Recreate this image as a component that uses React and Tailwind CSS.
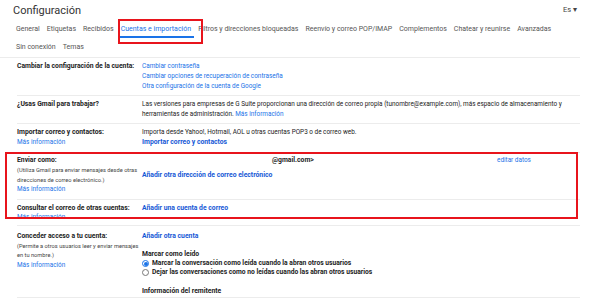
import React from 'react';

const tabs1 = [
  'General',
  'Etiquetas',
  'Recibidos',
  'Cuentas e importación',
  'Filtros y direcciones bloqueadas',
  'Reenvío y correo POP/IMAP',
  'Complementos',
  'Chatear y reunirse',
  'Avanzadas',
];

function Row({ label, children, className = '' }) {
  return (
    <div className={`grid grid-cols-[125px_1fr] border-b border-[#ececec] ${className}`}>
      <div>{label}</div>
      <div>{children}</div>
    </div>
  );
}

function Radio({ checked }) {
  return checked ? (
    <span className="flex h-[7px] w-[7px] items-center justify-center rounded-full border border-[#1a73e8]">
      <span className="h-[4px] w-[4px] rounded-full bg-[#1a73e8]" />
    </span>
  ) : (
    <span className="h-[7px] w-[7px] rounded-full border border-[#777]" />
  );
}

export default function App() {
  return (
    <div className="relative h-[298px] w-[589px] overflow-hidden bg-white font-['Roboto',sans-serif] text-[#222]">
      {/* header */}
      <div className="flex h-[20px] items-center justify-between pl-[13px] pr-[12px]">
        <h1 className="text-[11px] leading-none text-[#333]">Configuración</h1>
        <span className="text-[7.5px] text-[#444]">Es ▾</span>
      </div>

      {/* tabs */}
      <div className="w-[580px] whitespace-nowrap border-b border-[#ececec] pl-[16px] text-[7px] text-[#555]">
        <div className="flex h-[18px] items-center gap-[7px]">
          {tabs1.map((t) =>
            t === 'Cuentas e importación' ? (
              <span key={t} className="relative flex h-full items-center text-[#1a73e8]">
                {t}
                <span className="absolute bottom-[0px] left-[-3px] right-[-3px] h-[2px] bg-[#1a73e8]" />
              </span>
            ) : (
              <span key={t}>{t}</span>
            )
          )}
        </div>
        <div className="flex h-[19px] items-center gap-[7px]">
          <span>Sin conexión</span>
          <span>Temas</span>
        </div>
      </div>

      {/* settings */}
      <div className="w-[580px] pl-[17px] text-[6.4px] leading-[10px]">
        <Row
          className="pb-[4px] pt-[3px]"
          label={<span className="text-[6.8px] font-bold">Cambiar la configuración de la cuenta:</span>}
        >
          <div className="text-[#1a73e8]">Cambiar contraseña</div>
          <div className="text-[#1a73e8]">Cambiar opciones de recuperación de contraseña</div>
          <div className="text-[#1a73e8]">Otra configuración de la cuenta de Google</div>
        </Row>

        <Row
          className="pb-[4px] pt-[3px]"
          label={<span className="text-[6.8px] font-bold">¿Usas Gmail para trabajar?</span>}
        >
          <p className="pr-[2px]">
            Las versiones para empresas de G Suite proporcionan una dirección de correo propia
            (tunombre@example.com), más espacio de almacenamiento y herramientas de administración.{' '}
            <a className="text-[#1a73e8]">Más información</a>
          </p>
        </Row>

        <Row
          className="pb-[5px] pt-[3px]"
          label={
            <>
              <div className="text-[6.8px] font-bold">Importar correo y contactos:</div>
              <div className="text-[#1a73e8]">Más información</div>
            </>
          }
        >
          <div>Importa desde Yahoo!, Hotmail, AOL u otras cuentas POP3 o de correo web.</div>
          <div className="text-[6.8px] font-bold text-[#1558d6]">Importar correo y contactos</div>
        </Row>

        <Row
          className="pb-[5px] pt-[2px]"
          label={
            <>
              <div className="text-[6.8px] font-bold">Enviar como:</div>
              <div className="text-[5.7px] text-[#444]">(Utiliza Gmail para enviar mensajes desde otras</div>
              <div className="text-[5.7px] text-[#444]">direcciones de correo electrónico.)</div>
              <div className="leading-[9px] text-[#1a73e8]">Más información</div>
            </>
          }
        >
          <div className="flex">
            <span className="w-[355px] pl-[130px] text-[6.8px] font-bold">@gmail.com&gt;</span>
            <span className="text-[#1a73e8]">editar datos</span>
          </div>
          <div className="mt-[5px] text-[6.8px] font-bold text-[#1558d6]">
            Añadir otra dirección de correo electrónico
          </div>
        </Row>

        <Row
          className="pb-[4px] pt-[3px]"
          label={
            <>
              <div className="text-[6.8px] font-bold">Consultar el correo de otras cuentas:</div>
              <div className="leading-[8px] text-[#1a73e8]">Más información</div>
            </>
          }
        >
          <div className="text-[6.8px] font-bold text-[#1558d6]">Añadir una cuenta de correo</div>
        </Row>

        <Row
          className="pt-[5px]"
          label={
            <>
              <div className="text-[6.8px] font-bold">Conceder acceso a tu cuenta:</div>
              <div className="text-[5.7px] text-[#444]">(Permite a otros usuarios leer y enviar mensajes</div>
              <div className="leading-[9px] text-[5.7px] text-[#444]">en tu nombre.)</div>
              <div className="text-[#1a73e8]">Más información</div>
            </>
          }
        >
          <div className="text-[6.8px] font-bold text-[#1558d6]">Añadir otra cuenta</div>
          <div className="mt-[8px] text-[6.8px] font-bold">Marcar como leído</div>
          <div className="flex items-center gap-[3px] leading-[9px]">
            <Radio checked />
            <span className="text-[6.7px] font-bold">
              Marcar la conversación como leída cuando la abran otros usuarios
            </span>
          </div>
          <div className="flex items-center gap-[3px] leading-[9px]">
            <Radio />
            <span className="text-[6.7px] font-bold">
              Dejar las conversaciones como no leídas cuando las abran otros usuarios
            </span>
          </div>
          <div className="mb-[1px] mt-[9px] text-[6.8px] font-bold">Información del remitente</div>
        </Row>
      </div>

      {/* annotation boxes */}
      <div className="pointer-events-none absolute left-[118px] top-[19px] h-[25px] w-[85px] border-2 border-[#e8141c]" />
      <div className="pointer-events-none absolute left-[5px] top-[152px] h-[67px] w-[573px] border-2 border-[#e8141c]" />
    </div>
  );
}
